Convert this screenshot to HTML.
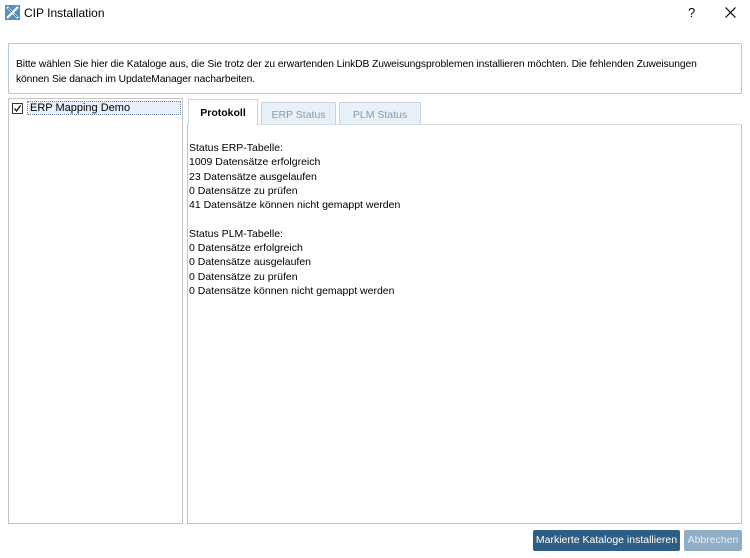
<!DOCTYPE html>
<html><head><meta charset="utf-8"><style>
*{margin:0;padding:0;box-sizing:border-box}
body{width:750px;height:558px;background:#fff;font-family:"Liberation Sans",sans-serif;font-size:10.5px;color:#000;position:relative;overflow:hidden}
.a{position:absolute}
.tab{position:absolute;border:1px solid #c8d3dd;border-bottom:none;text-align:center;font-size:10.5px}
.txt div{height:14.3px;line-height:14.3px;white-space:nowrap}
</style></head><body>
<svg class="a" style="left:5px;top:5px" width="15" height="15" viewBox="0 0 15 15"><rect width="15" height="15" fill="#5a8fb8"/><path d="M2 2l11 11M13 2L2 13" stroke="#fff" stroke-width="2.2"/><path d="M3 3l4 4M12 12l-3-3" stroke="#2a5f88" stroke-width="1"/></svg>
<div class="a" style="left:24px;top:6px;font-size:12px">CIP Installation</div>
<div class="a" style="left:688px;top:5px;font-size:13px">?</div>
<svg class="a" style="left:725px;top:7px" width="11" height="11"><path d="M0.5 0.5l10 10M10.5 0.5l-10 10" stroke="#000" stroke-width="1.2"/></svg>
<div class="a" style="left:8px;top:43px;width:734px;height:51px;border:1px solid #b7c8d6;border-radius:2px"></div>
<div class="a" style="left:16px;top:58px;line-height:14.5px;white-space:nowrap;font-size:10.3px;letter-spacing:-0.1px">Bitte wählen Sie hier die Kataloge aus, die Sie trotz der zu erwartenden LinkDB Zuweisungsproblemen installieren möchten. Die fehlenden Zuweisungen<br>können Sie danach im UpdateManager nacharbeiten.</div>
<div class="a" style="left:8px;top:98px;width:175px;height:426px;border:1px solid #c4c4c4"></div>
<div class="a" style="left:12px;top:103px;width:11px;height:11px;border:1px solid #333"></div>
<svg class="a" style="left:13px;top:104px" width="9" height="9"><path d="M1.5 4.5l2 2.5 4-5.5" stroke="#000" stroke-width="1.2" fill="none"/></svg>
<div class="a" style="left:27px;top:101px;width:154px;height:14px;border:1px dotted #6a8aa8;background:#e8f1fb;padding-left:2px;line-height:12px;font-size:11px">ERP Mapping Demo</div>
<div class="a" style="left:187px;top:124px;width:555px;height:400px;border:1px solid #c4c4c4;border-top:1px solid #d4dde6"></div>
<div class="tab" style="left:188px;top:99px;width:70px;height:26px;background:#fff;font-weight:bold;line-height:27px">Protokoll</div>
<div class="tab" style="left:261px;top:102px;width:75px;height:22px;background:#e9f1f8;color:#8b9aa8;line-height:24px">ERP Status</div>
<div class="tab" style="left:339px;top:102px;width:82px;height:22px;background:#e9f1f8;color:#8b9aa8;line-height:24px">PLM Status</div>
<div class="a txt" style="left:189px;top:141px">
<div>Status ERP-Tabelle:</div><div>1009 Datensätze erfolgreich</div><div>23 Datensätze ausgelaufen</div><div>0 Datensätze zu prüfen</div><div>41 Datensätze können nicht gemappt werden</div><div></div>
<div>Status PLM-Tabelle:</div><div>0 Datensätze erfolgreich</div><div>0 Datensätze ausgelaufen</div><div>0 Datensätze zu prüfen</div><div>0 Datensätze können nicht gemappt werden</div>
</div>
<div class="a" style="left:533px;top:530px;width:147px;height:21px;background:#2f5e84;color:#fff;border-radius:2px;text-align:center;line-height:21px;white-space:nowrap;font-size:10.5px">Markierte Kataloge installieren</div>
<div class="a" style="left:684px;top:530px;width:58px;height:21px;background:#8eaec8;color:#e8eef4;border-radius:2px;text-align:center;line-height:21px;white-space:nowrap;font-size:10.5px">Abbrechen</div>
</body></html>
